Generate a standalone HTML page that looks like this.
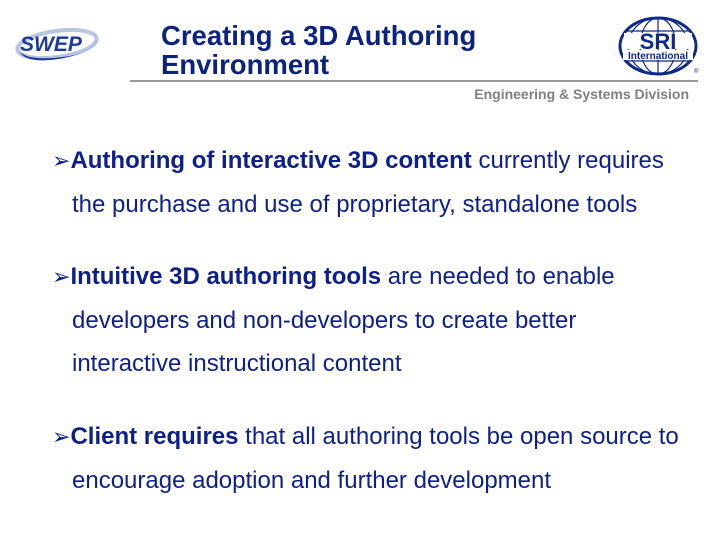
<!DOCTYPE html>
<html><head><style>
body{margin:0;width:720px;height:540px;background:#fff;position:relative;overflow:hidden;font-family:"Liberation Sans",Arial,sans-serif;}
.t{position:absolute;left:161px;top:21px;font-size:27.5px;font-weight:bold;color:#0b2380;line-height:29px;}
.line{position:absolute;left:130px;top:80px;width:568px;height:2px;background:#999;}
.div{position:absolute;right:31px;top:86px;font-size:14px;font-weight:bold;color:#808080;}
.p{position:absolute;left:52px;font-size:24px;color:#0d1f8a;line-height:43px;white-space:nowrap;}
.p b{font-weight:bold;}
.ar{font-size:22px;font-family:"DejaVu Sans",sans-serif;font-weight:bold;}
.ind{padding-left:20px;}
</style></head><body>
<svg style="position:absolute;left:10px;top:22px" width="90" height="42" viewBox="0 0 90 42">
<ellipse cx="47" cy="22" rx="40" ry="13" fill="none" stroke="#b8c4e4" stroke-width="4" transform="rotate(-8 47 22)"/>
<path d="M10 30 Q20 40 60 34 Q80 30 88 18 Q78 34 40 38 Q15 40 10 30Z" fill="#1a3a9a"/>
<text x="10" y="29" font-family="Liberation Sans" font-weight="bold" font-style="italic" font-size="21" fill="#1a3a9a">SWEP</text>
</svg>
<svg style="position:absolute;left:618px;top:16px" width="84" height="62" viewBox="0 0 84 62">
<ellipse cx="40" cy="30" rx="38" ry="28" fill="#fff" stroke="#0d2a8a" stroke-width="3"/>
<ellipse cx="40" cy="30" rx="18" ry="28" fill="none" stroke="#0d2a8a" stroke-width="1.2"/>
<ellipse cx="40" cy="30" rx="30" ry="28" fill="none" stroke="#0d2a8a" stroke-width="1.2"/>
<line x1="40" y1="2" x2="40" y2="58" stroke="#0d2a8a" stroke-width="1.2"/>
<line x1="8" y1="15" x2="72" y2="15" stroke="#0d2a8a" stroke-width="1.2"/>
<line x1="6" y1="45" x2="74" y2="45" stroke="#0d2a8a" stroke-width="1.2"/>
<rect x="6" y="17" width="68" height="16" fill="#fff"/>
<text x="40" y="33" text-anchor="middle" font-family="Liberation Sans" font-weight="900" font-size="22" fill="#0d2a8a">SRI</text>
<rect x="5" y="34" width="70" height="10" fill="#fff"/>
<text x="40" y="43" text-anchor="middle" font-family="Liberation Sans" font-weight="bold" font-size="10" fill="#0d2a8a">International</text>
<text x="76" y="57" font-size="6" fill="#0d2a8a">®</text>
</svg>
<div class="t">Creating a 3D Authoring<br>Environment</div>
<div class="line"></div>
<div class="div">Engineering &amp; Systems Division</div>
<div class="p" style="top:139px"><span class="ar">➢</span><b>Authoring of interactive 3D content</b> currently requires<br><span class="ind">the purchase and use of proprietary, standalone tools</span></div>
<div class="p" style="top:255px"><span class="ar">➢</span><b>Intuitive 3D authoring tools</b> are needed to enable<br><span class="ind">developers and non-developers to create better</span><br><span class="ind">interactive instructional content</span></div>
<div class="p" style="top:415px"><span class="ar">➢</span><b>Client requires</b> that all authoring tools be open source to<br><span class="ind">encourage adoption and further development</span></div>
</body></html>
